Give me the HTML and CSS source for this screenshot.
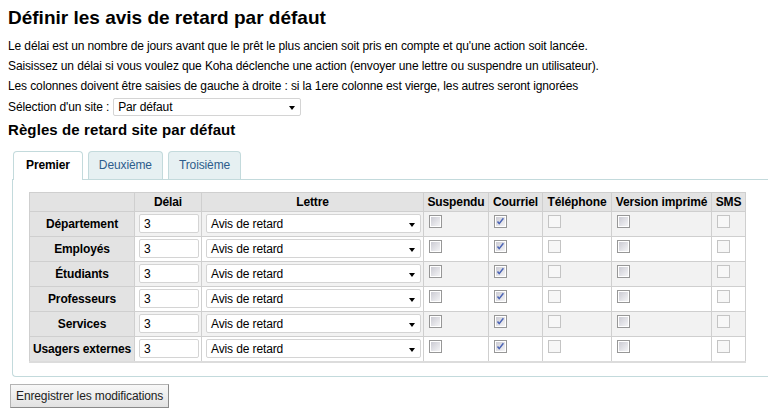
FILE: index.html
```html
<!DOCTYPE html>
<html lang="fr">
<head>
<meta charset="utf-8">
<title>Définir les avis de retard par défaut</title>
<link rel="stylesheet" href="styles.css">
</head>
<body>
<div class="page">
  <h1 class="title">Définir les avis de retard par défaut</h1>
  <p class="line">Le délai est un nombre de jours avant que le prêt le plus ancien soit pris en compte et qu'une action soit lancée.</p>
  <p class="line">Saisissez un délai si vous voulez que Koha déclenche une action (envoyer une lettre ou suspendre un utilisateur).</p>
  <p class="line">Les colonnes doivent être saisies de gauche à droite : si la 1ere colonne est vierge, les autres seront ignorées</p>
  <div class="site-row">
    <span class="site-label">Sélection d'un site :</span>
    <div class="select site-select"><span class="select-text">Par défaut</span><span class="arrow"></span></div>
  </div>
  <h3 class="subtitle">Règles de retard site par défaut</h3>

  <div class="tabs">
    <div class="tab active">Premier</div>
    <div class="tab">Deuxième</div>
    <div class="tab">Troisième</div>
  </div>
  <div class="panel">
    <table class="rules">
      <colgroup>
        <col class="c-label"><col class="c-delay"><col class="c-letter"><col class="c-susp"><col class="c-mail"><col class="c-phone"><col class="c-print"><col class="c-sms">
      </colgroup>
      <thead>
        <tr><th></th><th>Délai</th><th>Lettre</th><th>Suspendu</th><th>Courriel</th><th>Téléphone</th><th>Version imprimé</th><th>SMS</th></tr>
      </thead>
      <tbody id="rows"></tbody>
    </table>
  </div>
  <button class="save" type="button">Enregistrer les modifications</button>
</div>
<script>
  const cats = ["Département","Employés","Étudiants","Professeurs","Services","Usagers externes"];
  const boxOn = '<svg class="cb" width="13" height="13" viewBox="0 0 13 13"><defs><linearGradient id="g1" x1="0" y1="0" x2="1" y2="1"><stop offset="0" stop-color="#cbcbd3"/><stop offset="1" stop-color="#f4f4f6"/></linearGradient></defs><rect x="0.5" y="0.5" width="12" height="12" fill="#fff" stroke="#979797"/><rect x="2" y="2" width="9" height="9" fill="url(#g1)"/><path d="M3.5 6.5 L5.2 8.6 L9.4 3.2" fill="none" stroke="#4a63b5" stroke-width="1.5"/></svg>';
  const boxOff = '<svg class="cb" width="13" height="13" viewBox="0 0 13 13"><rect x="0.5" y="0.5" width="12" height="12" fill="#fff" stroke="#979797"/><rect x="2" y="2" width="9" height="9" fill="url(#g1)"/></svg>';
  const boxDis = '<svg class="cb" width="13" height="13" viewBox="0 0 13 13"><rect x="0.5" y="0.5" width="12" height="12" fill="#f7f7f7" stroke="#c4c4c4"/></svg>';
  const tb = document.getElementById("rows");
  tb.innerHTML = cats.map(c =>
    '<tr><th class="cat">' + c + '</th>' +
    '<td><input class="delay" type="text" value="3"></td>' +
    '<td><div class="select letter"><span class="select-text">Avis de retard</span><span class="arrow"></span></div></td>' +
    '<td class="box">' + boxOff + '</td>' +
    '<td class="box">' + boxOn + '</td>' +
    '<td class="box">' + boxDis + '</td>' +
    '<td class="box">' + boxOff + '</td>' +
    '<td class="box">' + boxDis + '</td></tr>').join("");
</script>
</body>
</html>
```

FILE: styles.css
```css
html, body {
  margin: 0;
  padding: 0;
  background: #fff;
}
body {
  font-family: "Liberation Sans", Arial, sans-serif;
  font-size: 12px;
  letter-spacing: -0.12px;
  color: #000;
  overflow: hidden;
}
.page {
  padding: 0 8px;
}
.title {
  font-size: 19px;
  font-weight: bold;
  line-height: 22px;
  letter-spacing: 0;
  margin: 7px 0 7px;
}
.line {
  margin: 0;
  line-height: 20px;
}
.site-row {
  display: flex;
  align-items: center;
  height: 22px;
  gap: 4px;
}
.select {
  display: flex;
  align-items: center;
  background: #fff;
  border: 1px solid #d4d4d4;
  border-radius: 2px;
  box-sizing: border-box;
  padding: 0 5px 0 4px;
  height: 19px;
}
.select-text {
  flex: 1;
  white-space: nowrap;
}
.arrow {
  width: 0;
  height: 0;
  border-left: 3.5px solid transparent;
  border-right: 3.5px solid transparent;
  border-top: 4px solid #000;
  margin-top: 2px;
}
.site-select {
  width: 188px;
  height: 18px;
}
.subtitle {
  font-size: 15px;
  font-weight: bold;
  line-height: 18px;
  letter-spacing: 0.1px;
  margin: 3px 0 0;
}
.tabs {
  display: flex;
  gap: 5px;
  margin-top: 12px;
  padding-left: 5px;
  position: relative;
  z-index: 1;
}
.tab {
  height: 27px;
  line-height: 27px;
  padding: 0 10px;
  border: 1px solid #c3dadc;
  border-bottom: none;
  border-radius: 4px 4px 0 0;
  background: #e6f0f2;
  color: #2d5d8c;
}
.tab.active {
  background: #fff;
  color: #000;
  font-weight: bold;
  padding: 0 12px;
  height: 28px;
  margin-bottom: -1px;
}
.panel {
  margin-left: 4px;
  margin-right: -8px;
  border: 1px solid #c3dadc;
  border-right: none;
  border-radius: 0 0 0 4px;
  padding: 12px 16px 13px 16px;
  box-sizing: border-box;
}
.rules {
  border-collapse: collapse;
  table-layout: fixed;
  width: 716px;
  border-bottom: 2px solid #dcdcdc;
}
.c-label { width: 105px; }
.c-delay { width: 67px; }
.c-letter { width: 222px; }
.c-susp { width: 65px; }
.c-mail { width: 54px; }
.c-phone { width: 69px; }
.c-print { width: 100px; }
.c-sms { width: 34px; }
.rules th, .rules td {
  border: 1px solid #cfcfcf;
  padding: 0;
}
.rules thead th {
  background: #e3e3e3;
  height: 18px;
  line-height: 18px;
  font-weight: bold;
  text-align: center;
  white-space: nowrap;
}
.rules tbody th.cat {
  background: #e3e3e3;
  font-weight: bold;
  text-align: center;
  white-space: nowrap;
  height: 24px;
}
.rules tbody tr:nth-child(odd) td {
  background: #f2f2f2;
}
.rules tbody tr:nth-child(even) td {
  background: #fff;
}
.rules td {
  vertical-align: top;
  padding: 2px 4px 0;
}
.delay {
  width: 60px;
  height: 19px;
  box-sizing: border-box;
  border: 1px solid #d4d4d4;
  border-radius: 2px;
  padding: 0 4px;
  font-family: "Liberation Sans", Arial, sans-serif;
  font-size: 12px;
  background: #fff;
  color: #000;
  margin: 0;
}
.letter {
  width: 215px;
}
.rules td.box {
  padding: 3px 5px 0;
}
.cb {
  display: block;
}
.save {
  margin: 7px 0 0 2px;
  height: 24px;
  padding: 0 5px;
  font-family: "Liberation Sans", Arial, sans-serif;
  font-size: 12px;
  letter-spacing: -0.12px;
  color: #222;
  background: linear-gradient(#f8f8f8, #e2e2e2);
  border: 1px solid #b4b4b4;
  border-right-color: #8a8a8a;
  border-bottom-color: #8a8a8a;
  border-radius: 0;
}
```
